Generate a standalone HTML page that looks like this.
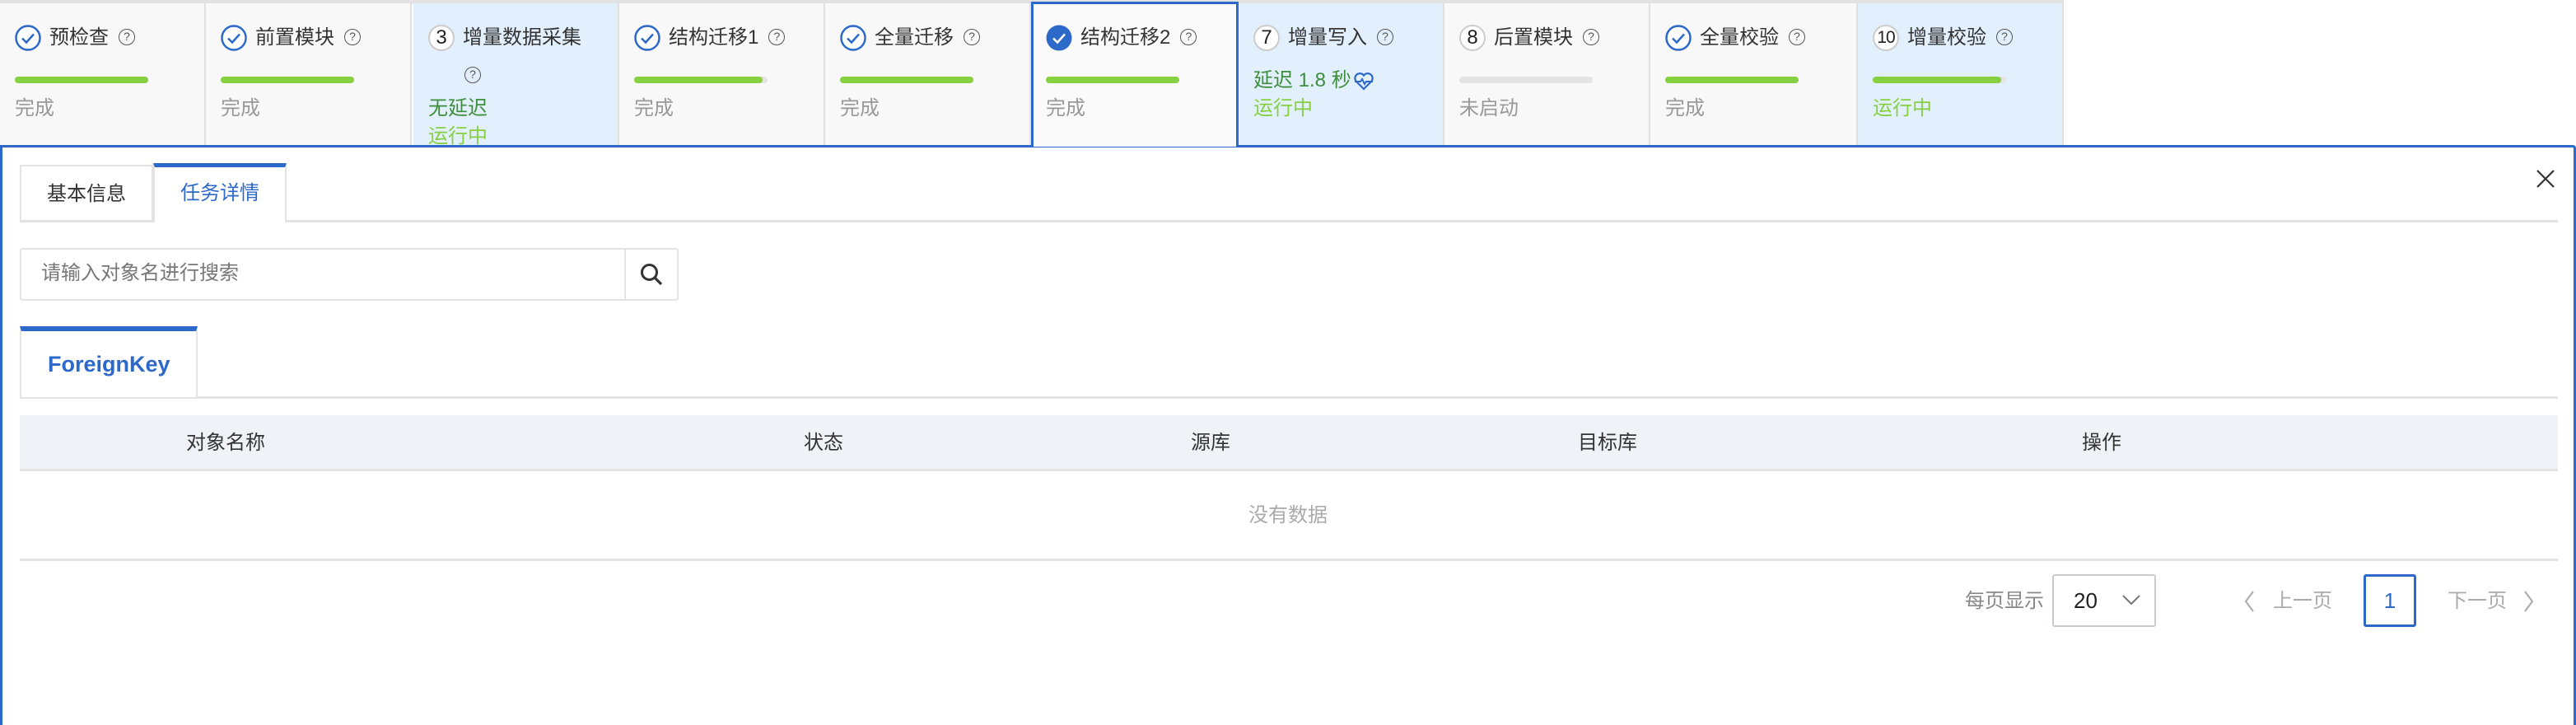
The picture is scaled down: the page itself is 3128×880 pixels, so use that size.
<!DOCTYPE html>
<html><head><meta charset="utf-8"><style>
*{margin:0;padding:0;box-sizing:border-box}
body{width:3128px;height:880px;background:#fff;position:relative;overflow:hidden;font-family:"Liberation Sans","Noto Sans CJK SC",sans-serif;color:#333;font-size:24px}
.a{position:absolute;white-space:nowrap}
.topline{position:absolute;left:0;top:0;width:2506px;height:5px;background:#e2e2e2}
.step{position:absolute;top:4px;height:172px;width:250px;background:#f8f8f8;border-right:2px solid #e0e0e0;overflow:hidden}
.step.run{background:#e2effc}
.ic{position:absolute;left:18px;top:26px;width:32px;height:32px}
.ttl{position:absolute;left:60px;top:26px;line-height:32px;font-size:24px;color:#333}
.q{display:inline-block;width:20px;height:20px;border:1.6px solid #555;border-radius:50%;font-size:14px;line-height:17px;text-align:center;color:#555;vertical-align:middle;margin-left:12px;position:relative;top:-2px}
.bar{position:absolute;left:18px;top:89px;width:162px;height:8px;border-radius:4px;background:#86d042}
.st{position:absolute;left:18px;top:112px;font-size:24px;color:#999;line-height:32px}
.num{position:absolute;left:18px;top:26px;width:32px;height:32px;border:2px solid #ccc;border-radius:50%;background:#fff;text-align:center;line-height:28px;font-size:24px;color:#222}
.green{color:#3e8e3e}.lg{color:#86d042}
.panel{position:absolute;left:0;top:176px;width:3128px;height:704px;border:3px solid #2d69c9;border-bottom:none;border-radius:0 4px 0 0}
.hl{position:absolute;height:3px;background:#e3e3e3}
</style></head><body>
<div class="topline"></div>
<div class="panel"></div>

<div class="step" style="left:0">
<svg class="ic" viewBox="0 0 32 32"><circle cx="16" cy="16" r="14.5" fill="#fff" stroke="#2d69c9" stroke-width="2.5"/><path d="M9 16.5l5 5 9-10" fill="none" stroke="#2d69c9" stroke-width="2.5"/></svg>
<div class="ttl">预检查<span class="q">?</span></div><div class="bar"></div><div class="st">完成</div></div>
<div class="step" style="left:250px">
<svg class="ic" viewBox="0 0 32 32"><circle cx="16" cy="16" r="14.5" fill="#fff" stroke="#2d69c9" stroke-width="2.5"/><path d="M9 16.5l5 5 9-10" fill="none" stroke="#2d69c9" stroke-width="2.5"/></svg>
<div class="ttl">前置模块<span class="q">?</span></div><div class="bar"></div><div class="st">完成</div></div>
<div class="step run" style="left:502px">
<div class="num">3</div>
<div class="ttl">增量数据采集</div><span class="q a" style="left:62px;top:72px;margin:0">?</span>
<div class="st green" style="top:112px">无延迟</div><div class="st lg" style="top:146px">运行中</div></div>
<div class="step" style="left:752px">
<svg class="ic" viewBox="0 0 32 32"><circle cx="16" cy="16" r="14.5" fill="#fff" stroke="#2d69c9" stroke-width="2.5"/><path d="M9 16.5l5 5 9-10" fill="none" stroke="#2d69c9" stroke-width="2.5"/></svg>
<div class="ttl">结构迁移1<span class="q">?</span></div><div class="bar" style="background:#e4e4e4"></div><div class="bar" style="width:156px"></div><div class="st">完成</div></div>
<div class="step" style="left:1002px">
<svg class="ic" viewBox="0 0 32 32"><circle cx="16" cy="16" r="14.5" fill="#fff" stroke="#2d69c9" stroke-width="2.5"/><path d="M9 16.5l5 5 9-10" fill="none" stroke="#2d69c9" stroke-width="2.5"/></svg>
<div class="ttl">全量迁移<span class="q">?</span></div><div class="bar"></div><div class="st">完成</div></div>
<div class="step" style="left:1252px;width:252px;border:3px solid #2d69c9;border-bottom:none;top:2px;height:176px;background:#fafafa">
<svg class="ic" viewBox="0 0 32 32" style="left:15px;top:25px"><circle cx="16" cy="16" r="15.5" fill="#2d69c9"/><path d="M9 16.5l5 5 9-10" fill="none" stroke="#fff" stroke-width="2.5"/></svg>
<div class="ttl" style="left:57px;top:25px">结构迁移2<span class="q">?</span></div><div class="bar" style="left:15px;top:88px"></div><div class="st" style="left:15px;top:111px">完成</div></div>
<div class="step run" style="left:1504px">
<div class="num">7</div>
<div class="ttl">增量写入<span class="q">?</span></div>
<div class="st green" style="top:78px">延迟 1.8 秒<svg width="26" height="26" viewBox="0 0 26 26" style="vertical-align:middle;margin-left:2px"><path d="M13 22L3.5 12.5A5.5 5.5 0 0 1 13 5.5a5.5 5.5 0 0 1 9.5 7z" fill="none" stroke="#2d69c9" stroke-width="2.2"/><path d="M2 13h7l2-3 3 6 2-3h8" fill="none" stroke="#2d69c9" stroke-width="2"/></svg></div>
<div class="st lg">运行中</div></div>
<div class="step" style="left:1754px">
<div class="num">8</div>
<div class="ttl">后置模块<span class="q">?</span></div><div class="bar" style="background:#e4e4e4"></div><div class="st">未启动</div></div>
<div class="step" style="left:2004px;width:252px">
<svg class="ic" viewBox="0 0 32 32"><circle cx="16" cy="16" r="14.5" fill="#fff" stroke="#2d69c9" stroke-width="2.5"/><path d="M9 16.5l5 5 9-10" fill="none" stroke="#2d69c9" stroke-width="2.5"/></svg>
<div class="ttl">全量校验<span class="q">?</span></div><div class="bar"></div><div class="st">完成</div></div>
<div class="step run" style="left:2256px">
<div class="num" style="font-size:21px;letter-spacing:-1px">10</div>
<div class="ttl">增量校验<span class="q">?</span></div><div class="bar" style="background:#e4e4e4"></div><div class="bar" style="width:156px"></div><div class="st lg">运行中</div></div>

<div class="a" style="left:24px;top:200px;width:162px;height:70px;border:2px solid #e3e3e3;border-bottom:none;text-align:center;line-height:68px;font-size:24px;color:#333">基本信息</div>
<div class="a" style="left:186px;top:198px;width:162px;height:72px;border:2px solid #e3e3e3;border-top:5px solid #2d69c9;border-bottom:none;background:#fff;text-align:center;line-height:64px;font-size:24px;color:#2d69c9;z-index:2">任务详情</div>
<div class="hl" style="left:24px;top:267px;width:3082px"></div>
<svg class="a" style="left:3080px;top:206px" width="22" height="22" viewBox="0 0 22 22"><path d="M1 1l20 20M21 1L1 21" stroke="#333" stroke-width="2.2"/></svg>

<div class="a" style="left:24px;top:301px;width:800px;height:64px;border:2px solid #e3e3e3;border-radius:3px"></div>
<div class="a" style="left:758px;top:301px;width:2px;height:64px;background:#e3e3e3"></div>
<div class="a" style="left:50px;top:316px;font-size:24px;color:#777;line-height:32px">请输入对象名进行搜索</div>
<svg class="a" style="left:776px;top:318px" width="30" height="30" viewBox="0 0 30 30"><circle cx="12.5" cy="12.5" r="9" fill="none" stroke="#333" stroke-width="3"/><path d="M19 19l8 8" stroke="#333" stroke-width="3.2"/></svg>

<div class="a" style="left:24px;top:396px;width:216px;height:86px;border:2px solid #e3e3e3;border-top:6px solid #2d69c9;border-bottom:none;background:#fff;z-index:2;font-size:27px;font-weight:bold;color:#2d69c9;line-height:80px;padding-left:32px">ForeignKey</div>
<div class="hl" style="left:24px;top:481px;width:3082px"></div>

<div class="a" style="left:24px;top:504px;width:3082px;height:68px;background:#eff2f7;border-bottom:3px solid #e3e3e3"></div>
<div class="a" style="left:226px;top:522px;line-height:32px">对象名称</div>
<div class="a" style="left:976px;top:522px;line-height:32px">状态</div>
<div class="a" style="left:1446px;top:522px;line-height:32px">源库</div>
<div class="a" style="left:1916px;top:522px;line-height:32px">目标库</div>
<div class="a" style="left:2528px;top:522px;line-height:32px">操作</div>
<div class="a" style="left:1516px;top:610px;line-height:32px;color:#aaa">没有数据</div>
<div class="hl" style="left:24px;top:678px;width:3082px"></div>

<div class="a" style="left:2386px;top:714px;line-height:32px;color:#888">每页显示</div>
<div class="a" style="left:2492px;top:697px;width:126px;height:64px;border:2px solid #c8ccd2;border-radius:3px"></div>
<div class="a" style="left:2518px;top:712px;line-height:34px;font-size:26px;color:#222">20</div>
<svg class="a" style="left:2576px;top:720px" width="24" height="16" viewBox="0 0 24 16"><path d="M2 3l10 10 10-10" fill="none" stroke="#777" stroke-width="2"/></svg>
<svg class="a" style="left:2724px;top:716px" width="14" height="28" viewBox="0 0 14 28"><path d="M12 2L3 14l9 12" fill="none" stroke="#aaa" stroke-width="2"/></svg>
<div class="a" style="left:2760px;top:714px;line-height:32px;color:#aaa">上一页</div>
<div class="a" style="left:2870px;top:697px;width:64px;height:64px;border:3px solid #2d69c9;border-radius:3px;text-align:center;line-height:58px;font-size:26px;color:#2d69c9">1</div>
<div class="a" style="left:2972px;top:714px;line-height:32px;color:#aaa">下一页</div>
<svg class="a" style="left:3064px;top:716px" width="14" height="28" viewBox="0 0 14 28"><path d="M2 2l9 12-9 12" fill="none" stroke="#aaa" stroke-width="2"/></svg>
</body></html>
